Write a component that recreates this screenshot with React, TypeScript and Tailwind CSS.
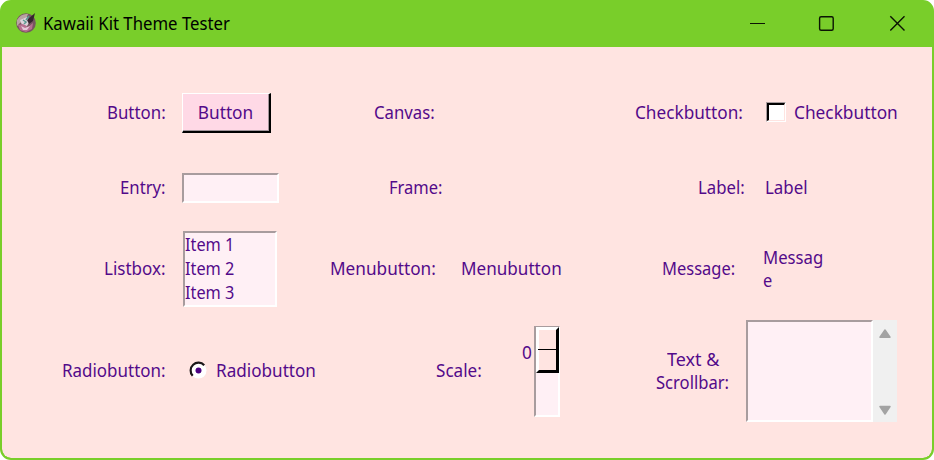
import { useLayoutEffect, useRef, useState } from "react";
import type { ReactNode } from "react";

/* One line of text, condensed horizontally to the given width. */
function Line({ children, w }: { children: string; w: number }) {
  const ref = useRef<HTMLSpanElement>(null);
  const [scale, setScale] = useState(1);
  useLayoutEffect(() => {
    if (ref.current) setScale(w / ref.current.offsetWidth);
  }, [w]);
  return (
    <span className="block shrink-0 whitespace-nowrap" style={{ width: w }}>
      <span ref={ref} className="inline-block origin-left" style={{ transform: `scaleX(${scale})` }}>
        {children}
      </span>
    </span>
  );
}

/* A single-line caption, raised a pixel above the row's centre line. */
function Caption({ children, w }: { children: string; w: number }) {
  return (
    <div className="pb-[2px]">
      <Line w={w}>{children}</Line>
    </div>
  );
}

function Row({ className, children }: { className: string; children: ReactNode }) {
  return <div className={`grid grid-cols-[318px_290px_322px] ${className}`}>{children}</div>;
}

function Cell({ className, children }: { className: string; children: ReactNode }) {
  return <div className={`flex items-center ${className}`}>{children}</div>;
}

const sunken = "border-2 border-t-[#a89c9e] border-l-[#a89c9e] border-b-white border-r-white bg-[#fff0f5]";

function AppIcon() {
  return (
    <svg width="22" height="22" viewBox="0 0 22 22">
      <circle cx="11" cy="11" r="9.8" fill="#77565f" />
      <path d="M2 8Q6 1 13 2L11 7L5 11L2 14Z" fill="#b9a3a4" />
      <path d="M5 8L12 5L15 9L12 14L7 13Z" fill="#ded3dc" />
      <path d="M12 8L20 1L18 9L14 12Z" fill="#35232f" />
      <path d="M3 13L8 12L13 15L18 11L17 17L11 20L5 18Z" fill="#b66f91" />
      <path d="M6 14L10 16L15 14L12 18L8 18Z" fill="#e6c6d8" />
      <path d="M8 8L11 10L9 12M14 4L11 8" stroke="#5c9a91" strokeWidth="1.5" fill="none" />
    </svg>
  );
}

function TitleBar() {
  return (
    <header className="flex h-[45px] items-center pb-[3px] pl-[13px] text-black">
      <AppIcon />
      <div className="ml-[6px] text-[17.5px] leading-6">
        <Line w={186.5}>Kawaii Kit Theme Tester</Line>
      </div>
      <svg className="ml-auto mr-[26px]" width="158" height="18" viewBox="0 0 158 18" fill="none" stroke="#0b1403" strokeWidth="1.4">
        <path d="M2 9.5H17" strokeWidth="1" />
        <rect x="71.6" y="2.7" width="13.6" height="13.6" rx="1.5" />
        <path d="M142.3 2.3L156.5 16.5M156.5 2.3L142.3 16.5" />
      </svg>
    </header>
  );
}

export default function App() {
  return (
    <div className="h-[460px] w-[934px] bg-white font-['Noto_Sans',sans-serif]">
      <div className="flex h-[460px] w-[934px] flex-col overflow-hidden rounded-[11px] border-2 border-[#79ce2a] bg-[#79ce2a]">
        <TitleBar />
        <main className="grow rounded-b-[9px] bg-[#ffe4e1] pt-[29px] text-[17.3px] leading-[23px] text-[#530a8a]">
          <Row className="h-[74px]">
            <Cell className="pl-[105px]">
              <Caption w={58.5}>Button:</Caption>
              <button className="ml-[16px] h-10 w-[89.5px] border-t-1 border-l-1 border-r-2 border-b-2 border-t-white border-l-white border-r-black border-b-black bg-[#ffd9e6]">
                <span className="flex h-full items-center border-r border-b border-[#a3959b] pl-[15px]">
                  <Line w={56}>Button</Line>
                </span>
              </button>
            </Cell>
            <Cell className="pl-[54px]">
              <Caption w={61}>Canvas:</Caption>
            </Cell>
            <Cell className="pl-[25px]">
              <Caption w={107.5}>Checkbutton:</Caption>
              <span className="ml-[23.5px] mt-[-2px] h-[20px] w-[20px] border border-t-[#a89c9e] border-l-[#a89c9e] border-b-white border-r-white bg-white">
                <span className="block h-full w-full border-t-2 border-l-2 border-r border-b border-t-black border-l-black border-r-[#ffe4e1] border-b-[#ffe4e1]" />
              </span>
              <span className="ml-[8px]">
                <Caption w={104}>Checkbutton</Caption>
              </span>
            </Cell>
          </Row>
          <Row className="h-[76px]">
            <Cell className="pl-[118px]">
              <Caption w={45.5}>Entry:</Caption>
              <span className={`ml-[16.5px] h-[30px] w-[97px] ${sunken}`} />
            </Cell>
            <Cell className="pl-[69px]">
              <Caption w={53.5}>Frame:</Caption>
            </Cell>
            <Cell className="pl-[88px]">
              <Caption w={46.5}>Label:</Caption>
              <span className="ml-[20.5px]">
                <Caption w={43}>Label</Caption>
              </span>
            </Cell>
          </Row>
          <Row className="h-[86px]">
            <Cell className="pl-[102px]">
              <Caption w={62}>Listbox:</Caption>
              <div className={`ml-[17px] h-[76px] w-[94px] leading-6 ${sunken}`}>
                <Line w={49}>Item 1</Line>
                <Line w={49}>Item 2</Line>
                <Line w={49}>Item 3</Line>
              </div>
            </Cell>
            <Cell className="pl-[10px]">
              <Caption w={105.5}>Menubutton:</Caption>
              <span className="ml-[25.5px]">
                <Caption w={101}>Menubutton</Caption>
              </span>
            </Cell>
            <Cell className="pl-[52px]">
              <Caption w={73.5}>Message:</Caption>
              <div className="ml-[27px]">
                <Line w={60}>Messag</Line>
                <Line w={9.5}>e</Line>
              </div>
            </Cell>
          </Row>
          <Row className="h-[118px]">
            <Cell className="pl-[60px]">
              <Caption w={104}>Radiobutton:</Caption>
              <svg className="ml-[23px] mt-[-2px]" width="19" height="19" viewBox="0 0 19 19" fill="none">
                <circle cx="9.5" cy="9.5" r="8" fill="#fff" />
                <path d="M3.7 14.8A7.8 7.8 0 0 1 15.2 4.2" stroke="#1c1719" strokeWidth="2.2" />
                <circle cx="9.5" cy="9.5" r="3" fill="#4b0082" />
              </svg>
              <span className="ml-[8px]">
                <Caption w={100}>Radiobutton</Caption>
              </span>
            </Cell>
            <Cell className="pl-[115.5px]">
              <Caption w={45.5}>Scale:</Caption>
              <span className="mb-[37px] ml-[41px]">
                <Line w={10}>0</Line>
              </span>
              <div className={`ml-[2px] h-[91px] w-[26px] ${sunken}`}>
                <div className="-mr-[1px] -mt-px h-[46px] border-t-3 border-r-3 border-b-3 border-l-3 border-t-white border-l-white border-r-black border-b-black bg-[#ffe4e1]">
                  <div className="-ml-px h-[20px] border-b border-black" />
                </div>
              </div>
            </Cell>
            <Cell className="pl-[46px]">
              <div className="flex flex-col items-center">
                <Line w={52}>Text &amp;</Line>
                <Line w={73}>Scrollbar:</Line>
              </div>
              <div className={`ml-[17px] h-[102px] w-[127px] ${sunken}`} />
              <svg width="24" height="102" viewBox="0 0 24 102">
                <path d="M0 0H24V102H0Z" fill="#f0f0f0" />
                <path d="M7 17.2L12 10L17 17.2Z M7 86.6L12 94L17 86.6Z" fill="#a3a3a3" stroke="#a3a3a3" strokeWidth="1.5" strokeLinejoin="round" />
              </svg>
            </Cell>
          </Row>
        </main>
      </div>
    </div>
  );
}
